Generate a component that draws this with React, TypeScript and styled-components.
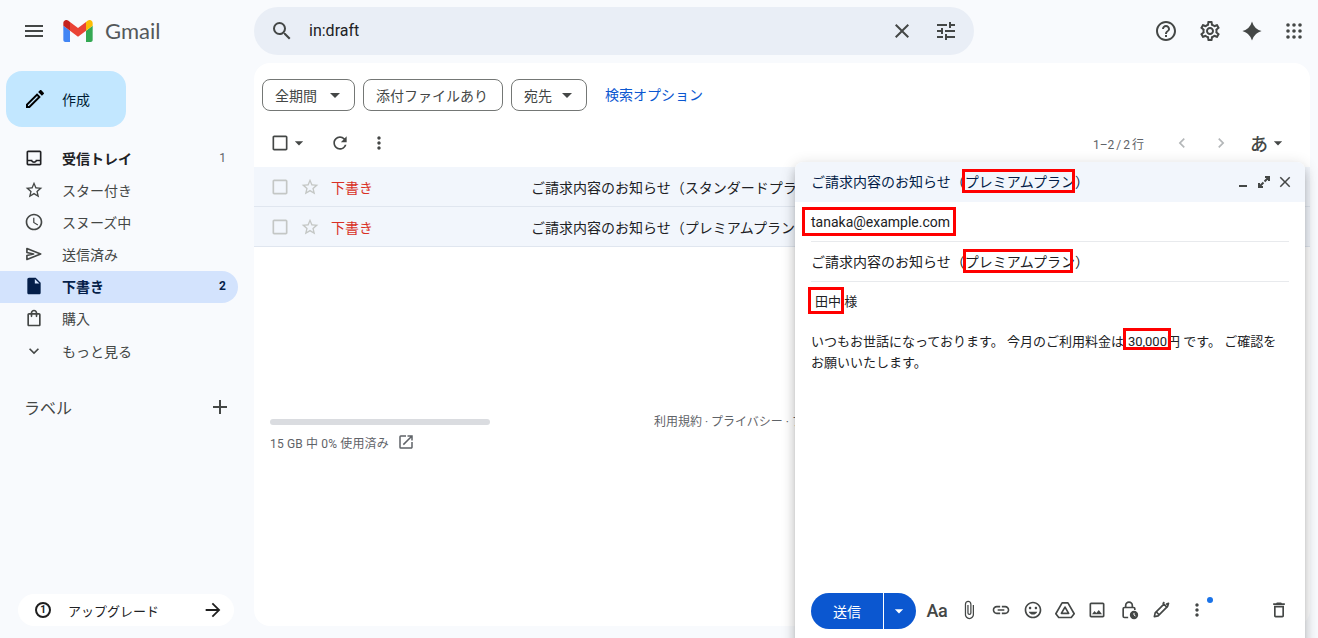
import type { ReactNode } from "react";
import styled, { createGlobalStyle } from "styled-components";
import {
  MdAdd,
  MdArrowDropDown,
  MdArrowForward,
  MdCheckBoxOutlineBlank,
  MdChevronLeft,
  MdChevronRight,
  MdClose,
  MdExpandMore,
  MdHelpOutline,
  MdInsertDriveFile,
  MdLink,
  MdMenu,
  MdMoreVert,
  MdOpenInNew,
  MdOutlineAccessTime,
  MdOutlineAttachFile,
  MdOutlineCreate,
  MdOutlineDelete,
  MdOutlineImage,
  MdOutlineInbox,
  MdOutlineInsertEmoticon,
  MdOutlineSettings,
  MdOutlineShoppingBag,
  MdRefresh,
  MdSearch,
  MdStarBorder,
  MdTune,
} from "react-icons/md";

const FONT = `Roboto, "Noto Sans CJK JP", sans-serif`;

const GlobalStyle = createGlobalStyle`
  html, body { margin: 0; height: 100%; overflow: hidden; }
  body { font-family: ${FONT}; background: #f8fafd; color: #202124; }
  #root { height: 100%; }
  * { box-sizing: border-box; }
`;

const Page = styled.div`
  position: relative;
  display: flex;
  flex-direction: column;
  height: 638px;
  overflow: hidden;
  background: #f8fafd;
`;

/* top bar */
const TopBar = styled.header`
  display: flex;
  align-items: center;
  height: 63px;
  flex: none;
  padding-bottom: 1px;
`;

const Brand = styled.div`
  display: flex;
  align-items: center;
  width: 254px;
  flex: none;
  padding-left: 22px;
  color: #444746;
`;

const LogoWrap = styled.div`
  display: flex;
  margin-left: 17px;
`;

const LogoText = styled.span`
  margin-left: 12px;
  padding-bottom: 2px;
  font-family: Lato, Roboto, sans-serif;
  font-size: 22px;
  color: #54585b;
`;

const SearchBar = styled.div`
  display: flex;
  align-items: center;
  width: 720px;
  height: 48px;
  padding: 0 16px;
  border-radius: 24px;
  background: #e9eef6;
  color: #444746;
`;

const SearchText = styled.span`
  flex: 1;
  margin-left: 15px;
  padding-bottom: 2px;
  font-size: 16px;
  color: #202124;
`;

const SearchClear = styled.span`
  display: flex;
  margin-right: 20px;
`;

const TopActions = styled.div`
  display: flex;
  align-items: center;
  margin-left: auto;
  padding-right: 3px;
  color: #444746;
`;

const ActionSlot = styled.span<{ $gap?: number }>`
  display: flex;
  align-items: center;
  justify-content: center;
  width: 42px;
  margin-right: ${(p) => p.$gap ?? 0}px;
`;

/* layout below the bar */
const Content = styled.div`
  display: flex;
  flex: 1;
  min-height: 0;
`;

const Sidebar = styled.aside`
  display: flex;
  flex-direction: column;
  width: 254px;
  flex: none;
  padding-top: 8px;
  padding-bottom: 12px;
`;

const ComposeButton = styled.div`
  display: flex;
  align-items: center;
  width: 120px;
  height: 56px;
  margin-left: 6px;
  margin-bottom: 16px;
  padding: 0 0 1px 17px;
  border-radius: 16px;
  background: #c2e7ff;
  color: #001d35;
  font-size: 14px;
  gap: 15px;
`;

const NavList = styled.nav`
  display: flex;
  flex-direction: column;
`;

const NavRow = styled.div<{ $active?: boolean; $bold?: boolean }>`
  display: flex;
  align-items: center;
  width: 238px;
  height: 32px;
  padding: 0 12px 2px 24px;
  border-radius: 0 16px 16px 0;
  font-size: 14px;
  font-weight: ${(p) => (p.$active || p.$bold ? 700 : 400)};
  color: ${(p) => (p.$active ? "#041e49" : p.$bold ? "#202124" : "#444746")};
  background: ${(p) => (p.$active ? "#d3e3fd" : "transparent")};

  &:last-child {
    padding-bottom: 0;
  }
`;

const NavIcon = styled.span`
  display: flex;
  width: 20px;
  margin-right: 18px;
`;

const NavCount = styled.span<{ $strong?: boolean }>`
  margin-left: auto;
  font-size: 12px;
  font-weight: ${(p) => (p.$strong ? 700 : 400)};
  color: ${(p) => (p.$strong ? "#041e49" : "#5f6368")};
`;

const LabelHead = styled.div`
  display: flex;
  align-items: center;
  justify-content: space-between;
  width: 238px;
  margin-top: 24px;
  padding: 0 6px 0 24px;
  height: 32px;
  font-size: 16px;
  color: #444746;
`;

const UpgradePill = styled.div`
  display: flex;
  align-items: center;
  width: 216px;
  height: 32px;
  margin: auto 0 0 18px;
  padding: 0 10px 0 17px;
  border-radius: 16px;
  background: #ffffff;
  font-size: 13px;
  color: #202124;
`;

const UpgradeBadge = styled.span`
  display: flex;
  align-items: center;
  justify-content: center;
  width: 16px;
  height: 16px;
  margin-right: 17px;
  border: 2px solid #1f1f1f;
  border-radius: 50%;
  font-size: 10px;
  font-weight: 700;
  line-height: 1;
`;

const UpgradeArrow = styled.span`
  display: flex;
  margin-left: auto;
  color: #1f1f1f;
`;

/* mail panel */
const MailPanel = styled.main`
  display: flex;
  flex-direction: column;
  flex: 1;
  min-width: 0;
  margin: 0 8px 12px 0;
  border-radius: 16px;
  background: #ffffff;
  overflow: hidden;
`;

const ChipRow = styled.div`
  display: flex;
  align-items: flex-start;
  gap: 8px;
  height: 60px;
  flex: none;
  padding: 16px 0 0 8px;
`;

const Chip = styled.div<{ $w: number }>`
  display: flex;
  align-items: center;
  justify-content: space-between;
  width: ${(p) => p.$w}px;
  height: 32px;
  padding: 0 7px 1px 12px;
  border: 1px solid #747775;
  border-radius: 8px;
  font-size: 14px;
  color: #444746;
`;

const ChipLink = styled.span`
  margin-left: 10px;
  height: 32px;
  line-height: 32px;
  font-size: 14px;
  color: #0b57d0;
`;

const Toolbar = styled.div`
  display: flex;
  align-items: center;
  height: 44px;
  flex: none;
  padding: 0 22px 4px 16px;
  color: #444746;
`;

const SelectBox = styled.span`
  display: flex;
  align-items: center;
  width: 44px;
`;

const SelectCaret = styled.span`
  display: flex;
  margin-left: -1px;
`;

const ToolIcon = styled.span`
  display: flex;
  justify-content: center;
  width: 20px;
  margin-left: 16px;
`;

const ToolIconNext = styled(ToolIcon)`
  margin-left: 19px;
`;

const Pager = styled.div`
  display: flex;
  align-items: center;
  margin-left: auto;
  font-size: 12px;
  color: #5f6368;
`;

const PagerArrow = styled.span`
  display: flex;
  justify-content: center;
  width: 39px;
  color: #b4b7b9;
`;

const PagerRange = styled.span`
  margin-right: 18px;
  word-spacing: -1px;
`;

const InputTool = styled.span`
  display: flex;
  align-items: center;
  margin-left: 10px;
  font-size: 18px;
  font-weight: 500;
  color: #444746;
`;

const MailList = styled.div`
  display: flex;
  flex-direction: column;
`;

const MailRow = styled.div`
  display: flex;
  align-items: center;
  height: 40px;
  padding-left: 16px;
  background: #f2f6fc;
  border-bottom: 1px solid #e0e6ef;
  color: #c4c7c5;
  white-space: nowrap;
`;

const MailStar = styled.span`
  display: flex;
  margin: 0 11px 0 10px;
`;

const DraftTag = styled.span`
  width: 200px;
  flex: none;
  font-size: 14px;
  color: #d93025;
`;

const MailSubject = styled.span`
  font-size: 14px;
  color: #202124;
`;

const PanelFooter = styled.div`
  display: flex;
  align-items: flex-start;
  margin-top: 172px;
  padding-left: 16px;
  font-size: 12px;
  color: #5f6368;
  white-space: nowrap;
`;

const Storage = styled.div`
  display: flex;
  flex-direction: column;
  width: 220px;
  flex: none;
`;

const StorageBar = styled.div`
  height: 6px;
  border-radius: 3px;
  background: #dadce0;
`;

const StorageLine = styled.div`
  display: flex;
  align-items: center;
  gap: 8px;
  margin-top: 6px;
  height: 22px;
  letter-spacing: 0.15px;
`;

const Terms = styled.div`
  margin-left: 164px;
  margin-top: -7px;
`;

/* compose window, floats over the list */
const ComposeWindow = styled.section`
  position: absolute;
  top: 162px;
  left: 795px;
  display: flex;
  flex-direction: column;
  width: 510px;
  height: 490px;
  border-radius: 8px 8px 0 0;
  background: #ffffff;
  box-shadow: 0 8px 10px 1px rgba(0, 0, 0, 0.14), 0 3px 14px 2px rgba(0, 0, 0, 0.12),
    0 5px 5px -3px rgba(0, 0, 0, 0.2);
`;

const ComposeHead = styled.div`
  display: flex;
  align-items: center;
  height: 40px;
  flex: none;
  padding: 0 11px 0 16px;
  border-radius: 8px 8px 0 0;
  background: #f2f6fc;
  font-size: 14px;
  line-height: 20px;
  color: #041e49;
`;

const HeadTitle = styled.span`
  flex: 1;
  white-space: nowrap;
`;

const HeadIcons = styled.span`
  display: flex;
  align-items: center;
  gap: 4px;
  color: #444746;
`;

const FieldRow = styled.div`
  display: flex;
  align-items: center;
  height: 40px;
  flex: none;
  margin: 0 16px;
  border-bottom: 1px solid #e8eaed;
  font-size: 14px;
  line-height: 20px;
  color: #202124;
  white-space: nowrap;
`;

const ComposeBody = styled.div`
  flex: 1;
  padding: 10px 26px 0 16px;
  font-size: 13px;
  line-height: 20.5px;
  color: #202124;
`;

const Greeting = styled.div`
  margin-bottom: 19.5px;
  padding-left: 4px;
`;

const RedBox = styled.span<{ $inset: string }>`
  position: relative;
  display: inline-block;

  &::after {
    content: "";
    position: absolute;
    inset: ${(p) => p.$inset};
    border: 3px solid #ff0000;
  }
`;

const AmountBox = styled(RedBox)`
  margin-left: 4px;
`;

const ComposeFoot = styled.div`
  display: flex;
  align-items: flex-start;
  height: 59px;
  flex: none;
  padding: 0 10px 0 16px;
  color: #444746;
`;

const SendGroup = styled.div`
  display: flex;
  height: 36px;
  margin-right: 5px;
  color: #ffffff;
`;

const SendMain = styled.span`
  display: flex;
  align-items: center;
  justify-content: center;
  width: 72px;
  border-radius: 18px 0 0 18px;
  background: #0b57d0;
  font-size: 14px;
`;

const SendCaret = styled.span`
  display: flex;
  align-items: center;
  justify-content: center;
  width: 32px;
  margin-left: 1px;
  padding-right: 2px;
  border-radius: 0 18px 18px 0;
  background: #0b57d0;
`;

const FootIcon = styled.span<{ $shift?: number }>`
  position: relative;
  display: flex;
  align-items: center;
  justify-content: center;
  width: 32px;
  height: 36px;
  padding-bottom: 2px;
  margin-left: ${(p) => p.$shift ?? 0}px;
`;

const FootTrash = styled(FootIcon)`
  margin-left: auto;
`;

const FontGlyph = styled.span`
  font-size: 18px;
  font-weight: 500;
  letter-spacing: -0.3px;
  color: #444746;
`;

const NotifyDot = styled.span`
  position: absolute;
  top: 4px;
  right: 0;
  width: 6px;
  height: 6px;
  border-radius: 50%;
  background: #1a73e8;
`;

function GmailLogo() {
  return (
    <svg width="30" height="22" viewBox="52 42 88 66">
      <path fill="#4285f4" d="M58 108h14V74L52 59v43c0 3.32 2.69 6 6 6" />
      <path fill="#34a853" d="M120 108h14c3.32 0 6-2.69 6-6V59l-20 15" />
      <path fill="#fbbc04" d="M120 48v26l20-15v-8c0-7.42-8.47-11.65-14.4-7.2" />
      <path fill="#ea4335" d="M72 74V48l24 18 24-18v26L96 92" />
      <path fill="#c5221f" d="M52 51v8l20 15V48l-5.6-4.2c-5.94-4.45-14.4-.22-14.4 7.2" />
    </svg>
  );
}

function Sparkle() {
  return (
    <svg width="20" height="20" viewBox="0 0 24 24" fill="currentColor">
      <path d="M12 0.5Q14.500 9.500 23.500 12Q14.500 14.500 12 23.500Q9.500 14.500 0.500 12Q9.500 9.500 12 0.500Z" />
    </svg>
  );
}

function AppsDots() {
  const spots = [2, 8, 14];
  return (
    <svg width="16" height="16" viewBox="0 0 16 16" fill="currentColor">
      {spots.map((y) => spots.map((x) => <circle key={`${x}-${y}`} cx={x} cy={y} r="1.8" />))}
    </svg>
  );
}

function SentIcon() {
  return (
    <svg width="20" height="20" viewBox="0 0 24 24" fill="none" stroke="currentColor" strokeWidth="2">
      <path d="M3.5 5.5 20 12 3.500 18.500v-4.700l8-1.800-8-1.800z" strokeLinejoin="round" />
    </svg>
  );
}

function DriveIcon() {
  return (
    <svg width="20" height="20" viewBox="0 0 24 24" fill="none" stroke="currentColor" strokeWidth="2" strokeLinejoin="round">
      <path d="M8.500 3.500h7L23 16.500l-3.500 4.500h-15L1 16.500z" />
      <path d="M12 8.500l4.400 7.500H7.600z" />
    </svg>
  );
}

function LockClock() {
  return (
    <svg width="20" height="20" viewBox="0 0 24 24" fill="none">
      <path
        d="M11 21H6.500A1.500 1.500 0 0 1 5 19.500V10.500A1.500 1.500 0 0 1 6.500 9H17.500A1.500 1.500 0 0 1 19 10.500V12M8 9V6.500a4 4 0 0 1 8 0V9"
        stroke="currentColor"
        strokeWidth="2"
      />
      <circle cx="18" cy="18" r="5" fill="currentColor" />
      <path d="M18 15.500V18l1.800 1.200" stroke="#fff" strokeWidth="1.200" />
    </svg>
  );
}

function SignPen() {
  return (
    <svg width="20" height="20" viewBox="0 0 24 24" fill="none" stroke="currentColor" strokeWidth="2" strokeLinejoin="round">
      <path d="M4 20l1-4.500L15.500 5 19 8.500 8.500 19z" />
      <path d="M14 4.500 16 2.500M18 5l3-1-1 3.500-1.500 1.500" />
      <path d="M6 14l4 4" />
    </svg>
  );
}

function NavItem(props: { icon: ReactNode; label: string; count?: string; active?: boolean; bold?: boolean }) {
  return (
    <NavRow $active={props.active} $bold={props.bold}>
      <NavIcon>{props.icon}</NavIcon>
      {props.label}
      {props.count && <NavCount $strong={props.active}>{props.count}</NavCount>}
    </NavRow>
  );
}

function MailLine({ subject }: { subject: string }) {
  return (
    <MailRow>
      <MdCheckBoxOutlineBlank size={20} />
      <MailStar>
        <MdStarBorder size={20} />
      </MailStar>
      <DraftTag>下書き</DraftTag>
      <MailSubject>{subject}</MailSubject>
    </MailRow>
  );
}

export default function App() {
  return (
    <Page>
      <GlobalStyle />
      <TopBar>
        <Brand>
          <MdMenu size={24} />
          <LogoWrap>
            <GmailLogo />
          </LogoWrap>
          <LogoText>Gmail</LogoText>
        </Brand>
        <SearchBar>
          <MdSearch size={24} />
          <SearchText>in:draft</SearchText>
          <SearchClear>
            <MdClose size={24} />
          </SearchClear>
          <MdTune size={24} />
        </SearchBar>
        <TopActions>
          <ActionSlot $gap={2}>
            <MdHelpOutline size={24} />
          </ActionSlot>
          <ActionSlot>
            <MdOutlineSettings size={24} />
          </ActionSlot>
          <ActionSlot>
            <Sparkle />
          </ActionSlot>
          <ActionSlot>
            <AppsDots />
          </ActionSlot>
        </TopActions>
      </TopBar>

      <Content>
        <Sidebar>
          <ComposeButton>
            <MdOutlineCreate size={24} color="#000" />
            作成
          </ComposeButton>
          <NavList>
            <NavItem icon={<MdOutlineInbox size={20} />} label="受信トレイ" count="1" bold />
            <NavItem icon={<MdStarBorder size={20} />} label="スター付き" />
            <NavItem icon={<MdOutlineAccessTime size={20} />} label="スヌーズ中" />
            <NavItem icon={<SentIcon />} label="送信済み" />
            <NavItem icon={<MdInsertDriveFile size={20} />} label="下書き" count="2" active />
            <NavItem icon={<MdOutlineShoppingBag size={20} />} label="購入" />
            <NavItem icon={<MdExpandMore size={20} />} label="もっと見る" />
          </NavList>
          <LabelHead>
            ラベル
            <MdAdd size={24} />
          </LabelHead>
          <UpgradePill>
            <UpgradeBadge>1</UpgradeBadge>
            アップグレード
            <UpgradeArrow>
              <MdArrowForward size={22} />
            </UpgradeArrow>
          </UpgradePill>
        </Sidebar>

        <MailPanel>
          <ChipRow>
            <Chip $w={93}>
              全期間
              <MdArrowDropDown size={24} />
            </Chip>
            <Chip $w={140}>添付ファイルあり</Chip>
            <Chip $w={76}>
              宛先
              <MdArrowDropDown size={24} />
            </Chip>
            <ChipLink>検索オプション</ChipLink>
          </ChipRow>
          <Toolbar>
            <SelectBox>
              <MdCheckBoxOutlineBlank size={20} />
              <SelectCaret>
                <MdArrowDropDown size={20} />
              </SelectCaret>
            </SelectBox>
            <ToolIcon>
              <MdRefresh size={20} />
            </ToolIcon>
            <ToolIconNext>
              <MdMoreVert size={20} />
            </ToolIconNext>
            <Pager>
              <PagerRange>1–2 / 2 行</PagerRange>
              <PagerArrow>
                <MdChevronLeft size={20} />
              </PagerArrow>
              <PagerArrow>
                <MdChevronRight size={20} />
              </PagerArrow>
              <InputTool>
                あ
                <MdArrowDropDown size={20} />
              </InputTool>
            </Pager>
          </Toolbar>
          <MailList>
            <MailLine subject="ご請求内容のお知らせ（スタンダードプラン）" />
            <MailLine subject="ご請求内容のお知らせ（プレミアムプラン）" />
          </MailList>
          <PanelFooter>
            <Storage>
              <StorageBar />
              <StorageLine>
                15 GB 中 0% 使用済み
                <MdOpenInNew size={18} />
              </StorageLine>
            </Storage>
            <Terms>利用規約 · プライバシー · プログラム ポリシー</Terms>
          </PanelFooter>
        </MailPanel>
      </Content>

      <ComposeWindow>
        <ComposeHead>
          <HeadTitle>
            ご請求内容のお知らせ（<RedBox $inset="-3px 0px -1px -3px">プレミアムプラン</RedBox>）
          </HeadTitle>
          <HeadIcons>
            <svg width="16" height="16" viewBox="0 0 16 16" fill="currentColor">
              <rect x="3" y="11" width="8" height="2" />
            </svg>
            <svg width="16" height="16" viewBox="0 0 16 16" fill="none" stroke="currentColor" strokeWidth="2">
              <path d="M9 3h4v4M13 3 8.500 7.500M7 13H3V9M3 13l4.500-4.500" />
            </svg>
            <MdClose size={18} />
          </HeadIcons>
        </ComposeHead>
        <FieldRow>
          <RedBox $inset="-5px -6px -4px -9px">tanaka@example.com</RedBox>
        </FieldRow>
        <FieldRow>
          ご請求内容のお知らせ（<RedBox $inset="-3px 2px -1px -2px">プレミアムプラン</RedBox>）
        </FieldRow>
        <ComposeBody>
          <Greeting>
            <RedBox $inset="-5px -3px -1px -7px">田中</RedBox> 様
          </Greeting>
          いつもお世話になっております。 今月のご利用料金は
          <AmountBox $inset="-4px -4px 3px -5px">30,000</AmountBox>円 です。 ご確認をお願いいたします。
        </ComposeBody>
        <ComposeFoot>
          <SendGroup>
            <SendMain>送信</SendMain>
            <SendCaret>
              <MdArrowDropDown size={20} />
            </SendCaret>
          </SendGroup>
          <FootIcon>
            <FontGlyph>Aa</FontGlyph>
          </FootIcon>
          <FootIcon>
            <MdOutlineAttachFile size={20} />
          </FootIcon>
          <FootIcon>
            <MdLink size={20} />
          </FootIcon>
          <FootIcon>
            <MdOutlineInsertEmoticon size={20} />
          </FootIcon>
          <FootIcon>
            <DriveIcon />
          </FootIcon>
          <FootIcon>
            <MdOutlineImage size={20} />
          </FootIcon>
          <FootIcon>
            <LockClock />
          </FootIcon>
          <FootIcon>
            <SignPen />
          </FootIcon>
          <FootIcon $shift={4}>
            <MdMoreVert size={20} />
            <NotifyDot />
          </FootIcon>
          <FootTrash>
            <MdOutlineDelete size={20} />
          </FootTrash>
        </ComposeFoot>
      </ComposeWindow>
    </Page>
  );
}
